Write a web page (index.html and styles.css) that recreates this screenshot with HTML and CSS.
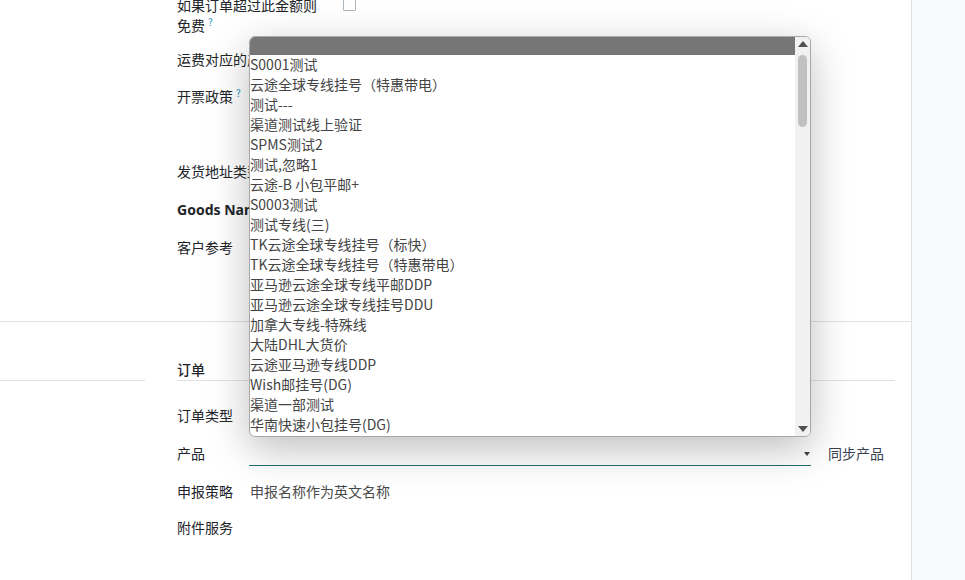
FILE: index.html
```html
<!DOCTYPE html>
<html lang="zh-CN">
<head>
    <meta charset="UTF-8">
    <title>订单</title>
    <link rel="stylesheet" href="styles.css">
</head>
<body>
    <div class="page">
        <div class="form">
            <div class="upper">
                <div class="row row-free">
                    <div class="label label-wide">如果订单超过此金额则<br>免费<sup class="tip">?</sup></div>
                    <div class="checkbox"></div>
                </div>
                <div class="row row-fee">
                    <div class="label label-wide">运费对应的产品</div>
                </div>
                <div class="row row-invoice">
                    <div class="label">开票政策<sup class="tip">?</sup></div>
                </div>
                <div class="row row-addr">
                    <div class="label label-wide">发货地址类型</div>
                </div>
                <div class="row row-goods">
                    <div class="label label-wide label-bold">Goods Name</div>
                </div>
                <div class="row">
                    <div class="label">客户参考</div>
                </div>
            </div>

            <div class="order">
                <div class="order-head">
                    <div class="left-rule"></div>
                    <div class="section-title">订单</div>
                </div>
                <div class="row order-row">
                    <div class="label">订单类型</div>
                </div>
                <div class="row order-row">
                    <div class="label">产品</div>
                    <div class="select-field">
                        <span class="caret"></span>
                    </div>
                    <div class="sync">同步产品</div>
                </div>
                <div class="row order-row order-row-short">
                    <div class="label">申报策略</div>
                    <div class="value">申报名称作为英文名称</div>
                </div>
                <div class="row order-row">
                    <div class="label">附件服务</div>
                </div>
            </div>

            <!-- open product list, drawn over the form -->
            <div class="dropdown">
                <div class="options">
                    <div class="option selected">&nbsp;</div>
                    <div class="option">S0001测试</div>
                    <div class="option">云途全球专线挂号（特惠带电）</div>
                    <div class="option">测试---</div>
                    <div class="option">渠道测试线上验证</div>
                    <div class="option">SPMS测试2</div>
                    <div class="option">测试,忽略1</div>
                    <div class="option">云途-B 小包平邮+</div>
                    <div class="option">S0003测试</div>
                    <div class="option">测试专线(三)</div>
                    <div class="option">TK云途全球专线挂号（标快）</div>
                    <div class="option">TK云途全球专线挂号（特惠带电）</div>
                    <div class="option">亚马逊云途全球专线平邮DDP</div>
                    <div class="option">亚马逊云途全球专线挂号DDU</div>
                    <div class="option">加拿大专线-特殊线</div>
                    <div class="option">大陆DHL大货价</div>
                    <div class="option">云途亚马逊专线DDP</div>
                    <div class="option">Wish邮挂号(DG)</div>
                    <div class="option">渠道一部测试</div>
                    <div class="option">华南快速小包挂号(DG)</div>
                </div>
                <div class="scrollbar">
                    <span class="arrow-up"></span>
                    <span class="thumb"></span>
                    <span class="arrow-down"></span>
                </div>
            </div>
        </div>
        <div class="chatter"></div>
    </div>
</body>
</html>
```

FILE: styles.css
```css
body {
    margin: 0;
    padding: 0;
    font-family: "Noto Sans CJK SC", "Noto Sans", sans-serif;
    font-size: 14px;
    line-height: 20px;
    color: #212529;
    background: #fff;
    overflow: hidden;
}

.page {
    display: flex;
    height: 580px;
}

.form {
    position: relative;
    width: 911px;
    background: #fff;
}

.chatter {
    flex: 1;
    background: #f8f9fa;
    border-left: 1px solid #dee2e6;
}

/* upper group */
.upper {
    height: 327px;
    margin-top: -5px;
    border-bottom: 1px solid #dee2e6;
    box-sizing: border-box;
}

.row {
    display: flex;
    align-items: flex-start;
    padding-left: 177px;
}

.row-free {
    height: 54px;
}

.row-fee {
    height: 37px;
}

.row-invoice {
    height: 75px;
}

.row-addr {
    height: 39px;
}

.row-goods {
    height: 37px;
}

.label {
    width: 72px;
    flex-shrink: 0;
    font-weight: 400;
    white-space: nowrap;
}

.label-wide {
    width: 166px;
}

.label-bold {
    font-family: "Noto Sans", sans-serif;
    font-weight: 700;
}

.tip {
    color: #1a8fc0;
    font-size: 10px;
    font-weight: 400;
    line-height: 0;
    margin-left: 3px;
    vertical-align: 5px;
}

.checkbox {
    width: 11px;
    height: 11px;
    margin-top: 3px;
    border: 1px solid #adb5bd;
    border-radius: 1px;
}

/* order section */
.order-head {
    display: flex;
    align-items: flex-end;
    height: 59px;
    margin-bottom: 24px;
}

.left-rule {
    width: 145px;
    border-bottom: 1px solid #dee2e6;
}

.section-title {
    width: 718px;
    margin-left: 32px;
    font-weight: 500;
    border-bottom: 1px solid #dee2e6;
    padding-bottom: 1px;
}

.order-row {
    height: 38px;
}

.order-row-short {
    height: 36px;
}

.select-field {
    position: relative;
    width: 562px;
    height: 22px;
    border-bottom: 1px solid #1f6f74;
}

.caret {
    position: absolute;
    right: 1px;
    top: 9px;
    border-left: 3px solid transparent;
    border-right: 3px solid transparent;
    border-top: 4px solid #444;
}

.sync {
    margin-left: 17px;
    color: #374151;
}

.value {
    margin-left: 1px;
    color: #4a4a4a;
}

/* dropdown list */
.dropdown {
    position: absolute;
    left: 249px;
    top: 36px;
    width: 560px;
    height: 399px;
    border: 1px solid #a8a8a8;
    border-radius: 6px;
    background: #fff;
    box-shadow: 0 12px 40px rgba(0, 0, 0, 0.26);
    overflow: hidden;
    display: flex;
}

.options {
    flex: 1;
    margin-top: -2px;
}

.option {
    height: 18px;
    line-height: 18px;
    padding-bottom: 2px;
    color: #444;
    white-space: nowrap;
}

.option.selected {
    background: #767676;
}

.scrollbar {
    position: relative;
    width: 15px;
    background: #f1f1f1;
}

.arrow-up,
.arrow-down {
    position: absolute;
    left: 3px;
    border-left: 5px solid transparent;
    border-right: 5px solid transparent;
}

.arrow-up {
    top: 4px;
    border-bottom: 6px solid #505050;
}

.arrow-down {
    bottom: 4px;
    border-top: 6px solid #505050;
}

.thumb {
    position: absolute;
    left: 3px;
    top: 18px;
    width: 9px;
    height: 72px;
    border-radius: 5px;
    background: #c1c1c1;
}
```
